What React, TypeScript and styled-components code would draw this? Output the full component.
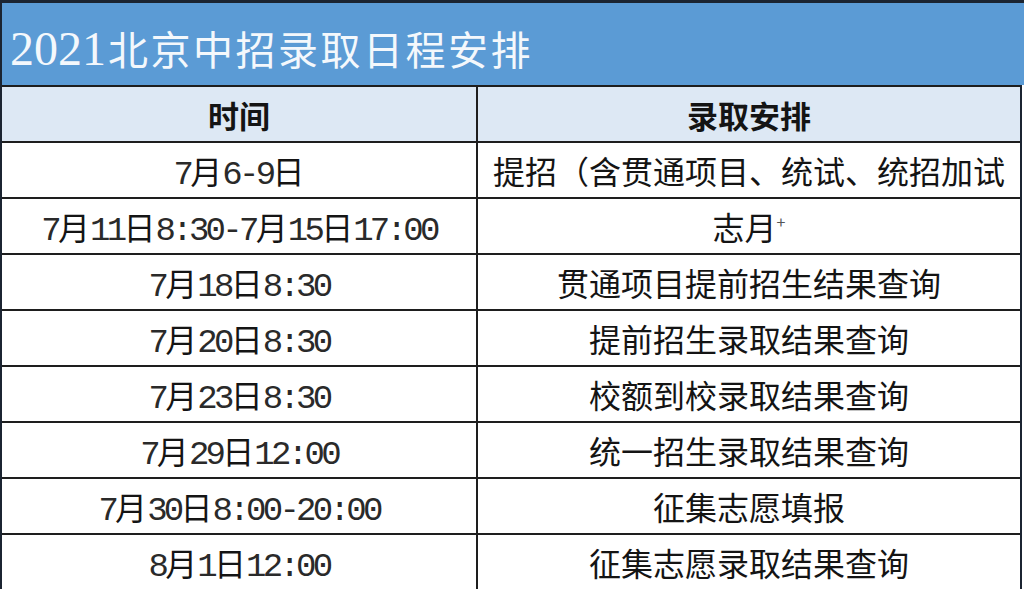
import React from 'react';
import styled, { createGlobalStyle } from 'styled-components';

const GlobalStyle = createGlobalStyle`
    html, body {
        margin: 0;
        padding: 0;
        background: #ffffff;
    }
`
const Sheet = styled.div`
    width: 1024px;
    height: 589px;
    overflow: hidden;
    box-sizing: border-box;
    border-top: 3px solid #1b2431;
    border-left: 2px solid #1b2431;
    background: #ffffff;
`
const TitleBar = styled.div`
    height: 82px;
    box-sizing: border-box;
    display: flex;
    align-items: center;
    padding: 8px 0 0 8px;
    background: #5b9bd5;
    color: #f4f8fc;
    font-family: "Noto Sans CJK SC", sans-serif;
    font-size: 40px;
    letter-spacing: 2.5px;
    white-space: nowrap;
`
const TitleDigits = styled.span`
    font-family: "Liberation Serif", serif;
    font-size: 48px;
    letter-spacing: 0;
    margin-right: 2px;
`
const Table = styled.div`
    width: 1020px;
    display: grid;
    grid-template-columns: 476px 1fr;
    grid-auto-rows: 56px;
    border-right: 2px solid #1b2431;
    box-sizing: border-box;
`
const Cell = styled.div<{ $head?: boolean; $left?: boolean }>`
    display: flex;
    align-items: center;
    justify-content: center;
    box-sizing: border-box;
    border-top: 2px solid #1e1e1e;
    border-right: ${(props) => (props.$left ? '2px solid #1e1e1e' : 'none')};
    background: ${(props) => (props.$head ? '#dde8f4' : '#ffffff')};
    color: #141414;
    font-family: "Noto Sans CJK SC", sans-serif;
    font-size: ${(props) => (props.$head ? '31px' : '32px')};
    font-weight: ${(props) => (props.$head ? 700 : 400)};
    white-space: nowrap;
    overflow: hidden;
`
const Line = styled.span`
    display: inline-block;
`
const Mono = styled.span`
    font-family: "Liberation Mono", "Courier New", monospace;
    font-size: 34px;
    font-weight: 400;
    color: #2a2a2a;
    letter-spacing: -3.7px;
`
const Mark = styled.span`
    font-size: 16px;
    color: #555;
    vertical-align: 12px;
`

const rows: [string, React.ReactNode][] = [
    ['7月6-9日', '提招（含贯通项目、统试、统招加试'],
    ['7月11日8:30-7月15日17:00', <Line>志月<Mark>+</Mark></Line>],
    ['7月18日8:30', '贯通项目提前招生结果查询'],
    ['7月20日8:30', '提前招生录取结果查询'],
    ['7月23日8:30', '校额到校录取结果查询'],
    ['7月29日12:00', '统一招生录取结果查询'],
    ['7月30日8:00-20:00', '征集志愿填报'],
    ['8月1日12:00', '征集志愿录取结果查询'],
];

const TimeText: React.FC<{ text: string }> = ({ text }) => (
    <Line>
        {text.split(/([0-9:\-]+)/).map((part, i) =>
            /[0-9:\-]/.test(part) ? <Mono key={i}>{part}</Mono> : <React.Fragment key={i}>{part}</React.Fragment>
        )}
    </Line>
);

export default function App() {
    return (
        <>
            <GlobalStyle />
            <Sheet>
                <TitleBar><TitleDigits>2021</TitleDigits>北京中招录取日程安排</TitleBar>
                <Table>
                    <Cell $head $left>时间</Cell>
                    <Cell $head>录取安排</Cell>
                    {rows.map(([time, plan]) => (
                        <React.Fragment key={time}>
                            <Cell $left><TimeText text={time} /></Cell>
                            <Cell>{plan}</Cell>
                        </React.Fragment>
                    ))}
                </Table>
            </Sheet>
        </>
    );
}
